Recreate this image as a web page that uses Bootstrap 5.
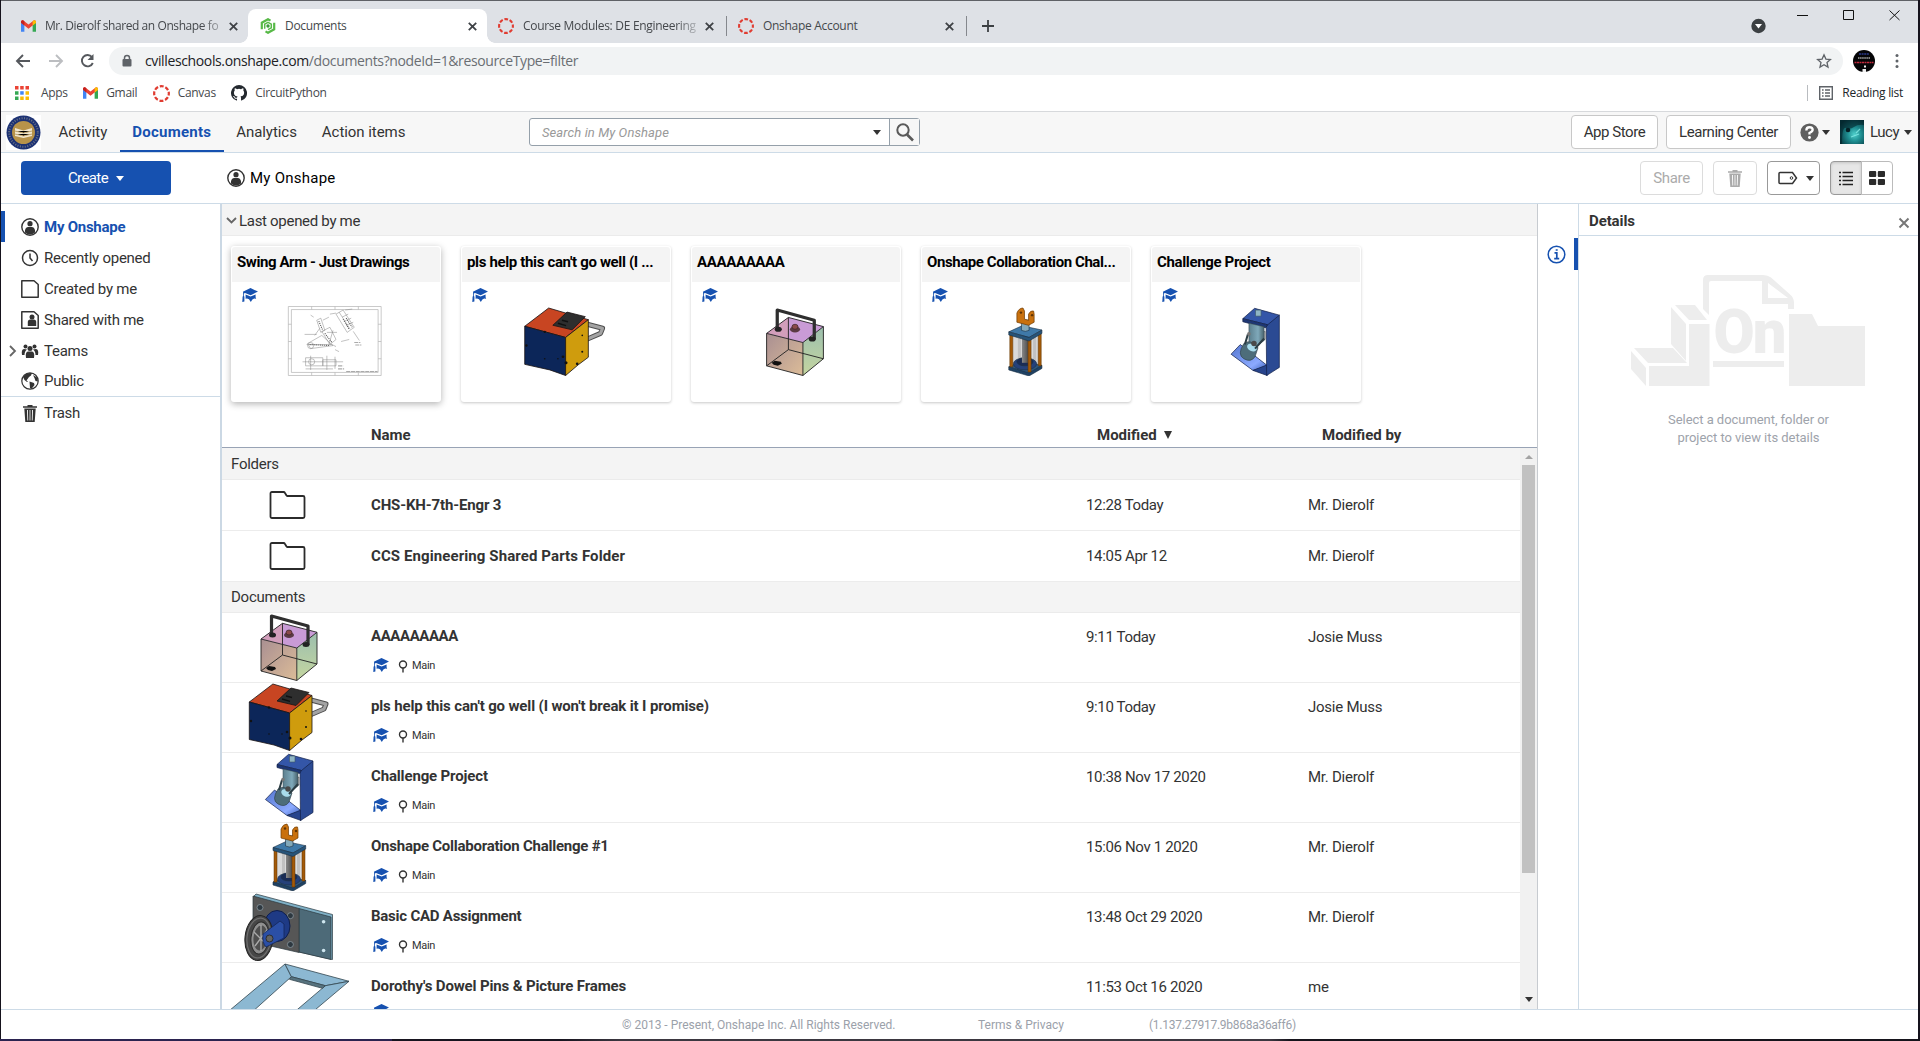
<!DOCTYPE html>
<html lang="en">
<head>
<meta charset="utf-8">
<title>Documents</title>
<link href="https://cdn.jsdelivr.net/npm/bootstrap@5.3.0/dist/css/bootstrap.min.css" rel="stylesheet">
<style>
:root{--blue:#1651b0;--rule:#cddbe7;--ink:#333}
html,body{height:1041px;overflow:hidden}
body{background:#15121c;font:15px/20px Roboto,"Liberation Sans",sans-serif;letter-spacing:-.25px;color:var(--ink)}
svg{display:block;flex:none}
.window{width:1917px;height:1039px;margin-left:1px;background:#fff;border-top:1px solid #5f6166}
.desk{height:2px;background:linear-gradient(90deg,#2b2350 0 392px,#17141f 392px 560px,#3b3740 620px 1270px,#16141c 1290px)}
.chrome-ui{font-family:"Open Sans","Noto Sans",sans-serif;font-size:12px;letter-spacing:-.3px;color:#45484c}
/* browser frame */
.tabstrip{height:42px;background:#dee1e6;padding-left:8px}
.tab{width:239px;height:34px;margin-top:8px;padding:0 10px 0 12px;position:relative}
.tab .tab-name{flex:1;overflow:hidden;white-space:nowrap;margin:0 8px 0 9px}
.tab .tab-name.tab-first{letter-spacing:-.42px;margin-right:6px}
.tab-shift{padding-left:11px;padding-right:12px}
.tab-fade{-webkit-mask:linear-gradient(90deg,#000 88%,rgba(0,0,0,.25))}
.tab-on{background:#fff;border-radius:8px 8px 0 0}
.tab-on:before,.tab-on:after{content:"";position:absolute;bottom:0;width:8px;height:8px}
.tab-on:before{left:-8px;background:radial-gradient(circle at 0 0,transparent 7.5px,#fff 8px)}
.tab-on:after{right:-8px;background:radial-gradient(circle at 100% 0,transparent 7.5px,#fff 8px)}
.tab-sep{border-right:1px solid #85888d;height:20px;align-self:center;margin-top:8px}
.addr-row{height:36px;padding:4px 10px 4px 12px}
.addr{height:28px;border-radius:14px;background:#f1f3f4;font-size:14px;letter-spacing:-.37px;color:#6a6e73;width:1734px;padding:0 11px 0 12px}
.addr b{font-weight:400;color:#202124}
.marks{height:33px;padding:0 15px 4px 14px;border-bottom:1px solid #d7d9dc}
.mark-item{margin-right:15.400px}
/* application bar */
.appbar{height:41px;background:#f7f7f7;border-bottom:1px solid var(--rule);padding-left:5px}
.appbar .nav{width:480px;flex:none;margin-left:5px}
.appbar .nav-link{padding:0 12.500px;height:40px;line-height:41px;color:var(--ink);letter-spacing:-.05px}
.appbar .nav-link.active{color:var(--blue);font-weight:700;border-bottom:2px solid var(--blue);letter-spacing:.25px}
.finder{flex:none;width:391px;height:28px;border:1px solid #95a0aa;border-radius:3px;background:#fff}
.finder i{font-size:13px;color:#999;letter-spacing:.1px;padding-top:2px}
.finder .go{width:30px;height:26px;border-left:1px solid #95a0aa;background:#f7f7f7}
.caret{width:0;height:0;border:4px solid transparent;border-top:5px solid var(--ink);border-bottom:0}
.app-right{margin-left:651px;width:347px;flex:none}
.obtn{height:34px;border:1px solid #c8c8c8;border-radius:4px;background:#fff;color:var(--ink);font-size:15px;line-height:30px;padding:0;letter-spacing:-.45px}
.app-store{width:87px;margin-top:-1px;flex:none}
.learn{width:125px;margin-top:-1px;flex:none}
.help{margin:0 3px 0 9px}
.face{margin-left:10px}
.user{margin:0 5px 0 6px;letter-spacing:-.5px}
.toolrow{height:51px;border-bottom:1px solid var(--rule);padding:8px 25px 8px 20px}
.create{width:150px;height:34px;background:var(--blue);border-radius:4px;color:#fff;font-size:15px;letter-spacing:-.6px;border:0;padding:0}
.white-caret{border-top-color:#fff}
.crumb{margin-left:56px}
.crumb span{letter-spacing:.25px;margin-left:5px}
.faint{color:#ababab;border-color:#dcdcdc}
.t-share{width:63px;letter-spacing:-.3px}
.t-trash{width:44px;margin-left:10px}
.t-tag{width:53px;margin:0 10px;border-color:#999}
.t-tag svg{margin-left:5px}
.t-view .btn{width:32px;height:34px;border-color:#bbb}
.t-view .sel{background:#e6e6e6;border-color:#999;box-shadow:inset 0 1px 3px rgba(0,0,0,.15)}
/* columns */
.work{height:805px}
.side{width:221px;border-right:2px solid #cbd8e4;padding-top:7px}
.side-item{height:30.800px;padding:2px 0 0 20px}
.side-item span{margin-left:5px}
.side-item.on{color:var(--blue);font-weight:700;box-shadow:inset 4px 0 var(--blue)}
.side-rule{border-top:1px solid var(--rule)}
.teams{padding-left:8px}
.teams svg:first-child{margin-right:4px}
.main-col{width:1316px;border-right:1px solid #c7cbd0}
.band{background:#f4f4f4;border-bottom:1px solid #ebebeb;height:32px;padding-left:9px}
.opened{padding:2px 0 0 4px}
.opened span{margin-left:2px;letter-spacing:-.3px}
.tiles{padding:10px 0 0 9px;gap:20px;height:166px}
.tile{width:210px;height:156px;border-radius:3px;background:#fff;box-shadow:0 1px 3px rgba(0,0,0,.22);padding:1px}
.tile.hot{box-shadow:0 2px 7px rgba(0,0,0,.3)}
.tile h6{height:35px;margin:0;border-radius:3px 3px 0 0;background:#f4f4f4;color:#000;font-size:15px;font-weight:700;line-height:30px;padding-left:5px;letter-spacing:-.35px;white-space:nowrap}
.tile .cap{margin:6px 0 0 10px}
.tile .pic{margin:4px 0 0 42px}
.l-tight{letter-spacing:-.42px!important}
.l-wide{letter-spacing:.1px!important}
.l-mid{letter-spacing:-.24px!important}
.heads{height:46px;border-bottom:1px solid #98a3b5;font-weight:700;padding-top:20px;letter-spacing:0}
.h-name{width:726px}
.h-mod{width:225px}
.sort{border:4px solid transparent;border-top:8px solid #333;border-bottom:0;margin:1px 0 0 7px}
.c-pic{width:149px;flex:none}
.c-name{width:715px;flex:none}
.c-mod{width:222px;flex:none;letter-spacing:-.35px}
.rows{height:561px;overflow:hidden}
.list{width:1298px}
.band.b2{height:31px}
.frow{height:51px;border-bottom:1px solid #ececec}
.drow{height:70px;border-bottom:1px solid #ececec}
.title{font-weight:700;letter-spacing:-.15px}
.drow .c-name{padding-top:13px}
.drow .c-mod,.drow .c-by{padding-top:14px}
.drow .c-pic svg{margin-left:7px;margin-top:-1px;height:69px;width:120px}
.frow .c-pic svg{margin-left:46.500px}
.meta{font-size:11px;letter-spacing:-.3px;margin-top:10px;line-height:20px;padding-left:1px}
.meta svg:first-child{margin:-2px 8px 0 0}
.meta svg:nth-child(2){margin-right:4px}
.bar{flex:none;width:17px;background:#f1f1f1;padding:7px 2px}
.bar .thumb{height:408px;background:#c1c1c1;margin-top:6px;flex:none}
.up{border:4px solid transparent;border-bottom:4px solid #a3a3a3;border-top:0}
.info-col{width:41px;border-right:1px solid var(--rule);padding-top:34px}
.info-tab{height:32px;border-right:4px solid var(--blue)}
.details h6{height:32px;border-bottom:1px solid var(--rule);margin:0;padding:2px 8px 0 10px;font-size:15px;font-weight:700;letter-spacing:-.1px}
.art{margin:39px 0 0 52px}
.hint{font-size:13px;line-height:18px;color:#9ea3ab;letter-spacing:-.05px;margin-top:25px}
.foot{height:30px;border-top:1px solid var(--rule);font-size:12px;color:#9ba1aa;letter-spacing:0;padding-left:621px}
.f1{width:356px}
.f2{width:171px}
.f3{letter-spacing:-.27px}
</style>
</head>
<body>
<svg width="0" height="0" class="position-absolute">
<defs>
<linearGradient id="gl" x1="0" y1="0" x2="1" y2="1"><stop stop-color="#a98f92"/><stop offset="1" stop-color="#dcbc98"/></linearGradient>
<linearGradient id="gr" x1="0" y1="0" x2="0" y2="1"><stop stop-color="#9cbfae"/><stop offset="1" stop-color="#c5d6a0"/></linearGradient>
<linearGradient id="gf" x1="0" y1="0" x2="1" y2="1"><stop stop-color="#5476cf"/><stop offset=".7" stop-color="#8caaff"/><stop offset="1" stop-color="#3a5fb8"/></linearGradient>
<linearGradient id="gm" x1="0" y1="0" x2="1" y2="0"><stop stop-color="#5c7f8e"/><stop offset=".6" stop-color="#7fa9ba"/><stop offset="1" stop-color="#48616c"/></linearGradient>
<linearGradient id="gs" x1="0" y1="0" x2="1" y2="0"><stop stop-color="#888"/><stop offset="1" stop-color="#4a4a4a"/></linearGradient>
<radialGradient id="neb" cx=".6" cy=".6" r=".7"><stop stop-color="#4fd0cc"/><stop offset=".4" stop-color="#1f8f92"/><stop offset="1" stop-color="#07333b"/></radialGradient>
<symbol id="gmail" viewBox="0 0 16 12"><path fill="#4285f4" d="M0 1.500V12h3.600V5z"/><path fill="#34a853" d="M16 1.500V12h-3.600V5z"/><path fill="#ea4335" d="M0 2.600V1.700C0 .2 1.700-.5 2.800.3L8 4.300l5.200-4C14.300-.5 16 .2 16 1.700V2.600L8 8.900z"/><path fill="#fbbc04" d="M12.400 5.500V1L13.200.3C14.300-.5 16 .2 16 1.700v1z"/><path fill="#c5221f" d="M0 1.700C0 .2 1.700-.5 2.800.3l.8.7v4.400L0 2.600z"/></symbol>
<symbol id="canvas" viewBox="0 0 16 16"><circle cx="8" cy="8" r="6.900" fill="none" stroke="#e03c31" stroke-width="2.100" stroke-dasharray="3.700 1.719" stroke-dashoffset="1.850"/></symbol>
<symbol id="ex" viewBox="0 0 8 8"><path d="M.7.7l6.600 6.600M7.300.7L.7 7.300" stroke="#3f4246" stroke-width="1.600"/></symbol>
<symbol id="person" viewBox="0 0 18 18"><circle cx="9" cy="9" r="8.200" fill="none" stroke="#333" stroke-width="1.400"/><circle cx="9" cy="5.700" r="2.600" fill="#333"/><path fill="#333" d="M4 14.500c-.4-3.500.8-5.200 3-5.600h4c2.200.4 3.400 2.100 3 5.600-3 2.500-7 2.500-10 0z"/></symbol>
<symbol id="trash" viewBox="0 0 14 17"><path fill="currentColor" fill-rule="evenodd" d="M4.500 0h5v1.200H14v1.600H0V1.200h4.500zM1.300 3.600h11.400L11.700 17H2.300zM4 5l.4 10.500h.8L4.900 5zm2.600 0v10.500h.8V5zm2.500 0l-.3 10.500h.8L10 5z"/></symbol>
<symbol id="cap" viewBox="0 0 16 14"><path fill="#1651b0" d="M8.500 0L16 3.600 8.700 7.200 3 5 1.900 5.600V8l.5.800V13.500L.300 14l.3-5.200.5-.8V4.200L.9 3.800zM3.600 6.500l5 1.900 5-2v2.800l.6 1.600-2-.3-1.800.9-1.600 2.600L7 11.200l-2-.8-1.400.3z"/></symbol>
<symbol id="branch" viewBox="0 0 10 13"><circle cx="5" cy="4.500" r="3.500" fill="none" stroke="#333" stroke-width="1.400"/><path stroke="#333" stroke-width="1.400" d="M5 8v4.500"/></symbol>
<symbol id="folder" viewBox="0 0 36 28"><path fill="none" stroke="#2b2b2b" stroke-width="1.800" stroke-linejoin="round" d="M1 2.500Q1 1 2.500 1H14q1 0 1.500 1L17 4.500q.4.500 1 .5h15.500Q35 5 35 6.500v19q0 1.500-1.500 1.500h-31Q1 27 1 25.500z"/></symbol>
<symbol id="p-cube" viewBox="0 0 120 69"><g stroke="#1a1414" stroke-width=".8" stroke-linejoin="round"><path fill="none" stroke="#4e4e4e" stroke-width="5" d="M82 18l15 4-2 5-14 6"/><path fill="none" stroke="#a3a3a3" stroke-width="3" d="M82 18l15 4-2 5-14 6"/><path fill="#c84522" d="M43.900 2L83 13.500 60.600 31 20.300 20z"/><path fill="#0c2659" d="M20.300 20l40.300 11v37.500L45 63l-24.700-5.500z"/><path fill="#cf9c0d" d="M60.600 31L83 13.500v37L73 58l-12.400 10.500z"/><path fill="#2e2e2e" d="M48 19l14-13 18 4.500-13 13z"/></g><path fill="none" stroke="#111" stroke-width="1.400" d="M53 17l8 2.300M57 14l6 1.500"/><g fill="#111"><circle cx="22" cy="39" r="1.200"/><circle cx="40" cy="52" r=".8"/><circle cx="53" cy="52" r=".8"/><circle cx="58" cy="50" r="1.300"/><circle cx="61" cy="56" r="1.500"/><circle cx="77" cy="29" r=".8"/><circle cx="77" cy="45" r="1"/><circle cx="72" cy="57" r="1.300"/><circle cx="40" cy="25.500" r="1.200"/></g></symbol>
<symbol id="p-clear" viewBox="0 0 120 69"><path fill="url(#gl)" d="M32 27l35.800 9v32.500L32 59z"/><path fill="url(#gr)" d="M67.800 36L88 20.300V52L67.800 68.500z"/><path fill="#c99bd6" d="M53.500 11.300L88 20.300 67.800 36 32 27z"/><path fill="#d9a0a8" opacity=".6" d="M53.500 11.300V32L32 27z"/><g fill="none" stroke="#222" stroke-width=".9" stroke-linejoin="round"><path d="M53.500 11.300L88 20.300 67.800 36 32 27zM32 27v32l35.800 9.500V36M67.800 68.500L88 52V20.300M53.500 11.300V43L32 59M53.500 43L88 52"/></g><path fill="none" stroke="#2f2f2f" stroke-width="3.200" stroke-linejoin="round" d="M42.500 24V4L79 14v19"/><ellipse cx="43.500" cy="23" rx="3.500" ry="2.500" fill="#222"/><ellipse cx="77" cy="32.500" rx="3.500" ry="2.500" fill="#222"/><ellipse cx="60" cy="23" rx="5" ry="3" fill="#5a3a44"/><ellipse cx="60" cy="20.500" rx="3" ry="2.500" fill="#8a4a4a" stroke="#3a2226" stroke-width=".7"/><path fill="#111" d="M37 56l3-2 6 1 1 2-4 2-4-1z"/></symbol>
<symbol id="p-arm" viewBox="0 0 120 69"><g stroke="#14224a" stroke-width=".7" stroke-linejoin="round"><path fill="url(#gf)" d="M36.400 47.500L45.500 38l27 21L58 63.500z"/><path fill="#27448c" d="M58 63.500L72 58v10.500z"/><path fill="#2b4a93" d="M71 18.500L84 9v51.500L71.500 68.500z"/><path fill="#3456a8" d="M59.600 2.300L84 9 72.500 18.500 48 12.500z"/><path fill="#1e3775" d="M48 12.500l24.500 6-2 3L48 15.500z"/></g><path fill="#c8c8c8" stroke="#555" stroke-width=".6" d="M65 27l5-2v8l-5 2z"/><path fill="url(#gm)" stroke="#33474f" stroke-width=".5" d="M54 17l15 3.500V34l-8 6-7-4z"/><path fill="#4d6d7a" stroke="#2c3d44" stroke-width=".6" d="M49 37q6-5 14 4l-3 9q-4 6-11 2t0-15z"/><ellipse cx="57" cy="41" rx="5" ry="3.500" fill="#a8dcec" transform="rotate(25 57 41)"/><path stroke="#2c3d44" stroke-width="2" d="M53 28l-3 10M69 32l-9 10"/><circle cx="59" cy="37" r="2.700" fill="#4a4a4a"/><circle cx="54" cy="27.500" r="1.800" fill="#777"/><path fill="#8fb5c4" stroke="#3c5662" stroke-width=".6" d="M60.500 4h5.500v6h-5.500z"/></symbol>
<symbol id="p-piston" viewBox="0 0 120 69"><path fill="#dadada" d="M48 28h27v30H48z"/><path fill="#c1c1c1" d="M53 30h3v28h-3zM68 30h3v28h-3z"/><g stroke="#1c3145" stroke-width=".6" stroke-linejoin="round"><path fill="#2e567d" d="M44 60l13-6 19.700 4.500L64 67z"/><path fill="#1f4264" d="M44 60l20 6 12.700-7.500v3L64 69l-20-6z"/><ellipse cx="60" cy="57" rx="11.500" ry="6" fill="#25417a"/><ellipse cx="60" cy="55" rx="8" ry="4" fill="#1a2c55"/></g><path fill="url(#gs)" d="M57 29h6.500v27H57z"/><path fill="#a35a08" stroke="#5e3303" stroke-width=".5" d="M45 27h3v33h-3zM63 31h3v34h-3zM73 27h3v32h-3z"/><g stroke="#1c3145" stroke-width=".6" stroke-linejoin="round"><path fill="#3f79a8" d="M44 25.500l13-6 19.700 4.200L64 31z"/><path fill="#275479" d="M44 25.500L64 31l12.700-7.300v3.300L64 34.500l-20-6z"/><path fill="#83a9ba" d="M56.500 14h7.500v10q-3.500 2-7.500 0z"/></g><path fill="#c9710e" stroke="#6e3c04" stroke-width=".7" d="M52 16V7q2-5 6-5l1.500 3v8l4 1V8q2-4 5-3l.5 3v8l-5.500 3z"/><circle cx="56" cy="6.500" r="1.200" fill="#5e3303"/><circle cx="67" cy="9" r="1.200" fill="#5e3303"/></symbol>
<symbol id="p-caster" viewBox="0 0 120 69"><g stroke="#2b3940" stroke-width=".7" stroke-linejoin="round"><path fill="#7fb0c6" d="M25 4l2-2 76.500 20.500v45H103L70 60z"/><path fill="#4d6a78" d="M70 16.500L102 25v42.500L70 60z"/><path fill="#565656" d="M24 4l46 12.500v44L24 50z"/></g><circle cx="94.600" cy="29.700" r="1.800" fill="#cfe6ef"/><circle cx="94.600" cy="58.500" r="1.800" fill="#cfe6ef"/><g fill="#2d3840" stroke="#8a979e" stroke-width=".8"><circle cx="31" cy="15.500" r="3"/><circle cx="61.400" cy="23.700" r="3"/><circle cx="61.400" cy="52.500" r="3"/></g><ellipse cx="48" cy="34" rx="13" ry="15.500" fill="#1e3a85" stroke="#101f4c"/><ellipse cx="30" cy="46" rx="14" ry="22.500" fill="#474747" stroke="#222" transform="rotate(6 30 46)"/><ellipse cx="30" cy="46" rx="12" ry="20" fill="none" stroke="#6e6e6e" stroke-width="1.200" transform="rotate(6 30 46)"/><ellipse cx="31" cy="46" rx="9" ry="16" fill="#8f8f8f" stroke="#2a2a2a" transform="rotate(6 31 46)"/><ellipse cx="31.500" cy="46" rx="7" ry="12.500" fill="#4e4e4e" transform="rotate(6 31 46)"/><path stroke="#aaa" stroke-width="1.300" d="M32 33v26M25 40l13 13M38 38L26 54"/><path fill="#2b4fa6" stroke="#132658" stroke-width=".8" d="M34 42l17-13 4 3v14L37 55q-4-4-3-13z"/><circle cx="40.500" cy="46.500" r="3.500" fill="#636363" stroke="#222" stroke-width=".8"/></symbol>
<symbol id="p-frame" viewBox="0 0 120 69"><g stroke="#33464f" stroke-width=".8" stroke-linejoin="round" fill="#8cb8d2"><path d="M56 2L-24 69H2L62.400 14.700z"/><path d="M56 2l64 17.300-23.600 4.400-34-9z"/><path d="M120 19.300L61 69H43l53.400-45.300z"/><path fill="#57737f" d="M62.400 14.700l34 9-3 2.600-33-9z"/></g></symbol>
<symbol id="p-draw" viewBox="0 0 120 69"><g fill="none" stroke="#b4b4b4" stroke-width=".7"><path d="M14 .5h91.500v68H14zM17 3.500h85.500v62H17zM37 .5v3M60 .5v3M83 .5v3M37 65.500v3M60 65.500v3M83 65.500v3M14 18h3M14 35h3M14 52h3M102.500 18h3M102.500 35h3M102.500 52h3"/></g><g fill="none" stroke="#858585" stroke-width=".5"><path d="M42 14l4-2 4 12-4 2zM47 25l8-4 6 12-6 5zM33 37l14-8 11 10-22 3zM32 38h25l4 2M40 29l5-7M58 24l-4 14M30 28h12M52 26h10M39 11l-3-2M48 14l6-3M61 8l7-4 11 17-7 5zM64 6l11 17M67 11l6-3M69 15l7-3M71 19l7-3M55 8l6-1M70 4l7-1M66 35l8-2M78 25l6 9M60 43l4 2M28 55h40M31 51h17v8H31zM48 53h13v6H48zM60 50v12M31 62h27M36 49v14M52 49v14"/><circle cx="36" cy="39" r="3"/><circle cx="37" cy="55" r="3"/></g><path stroke="#aaa" stroke-width="1.100" stroke-dasharray="4 .7" d="M71 64.500h31M79 36h6M80 38.500h6M63 59h5M63 62h6"/><g stroke="#555" stroke-width="1.100" stroke-dasharray="1 1"><path d="M35 38l20 1M50 27l7 9M68 13l6 10M71 12l6 9M44 15l4 9"/></g></symbol>
</defs>
</svg>

<div class="window d-flex flex-column">
  <div class="chrome-ui">
    <div class="tabstrip d-flex">
      <div class="tab d-flex align-items-center"><svg width="15" height="12"><use href="#gmail"/></svg><span class="tab-name tab-first tab-fade">Mr. Dierolf shared an Onshape fo</span><svg width="9" height="9"><use href="#ex"/></svg></div>
      <div class="tab tab-on d-flex align-items-center"><svg width="16" height="16" viewBox="0 0 16 16"><path fill="none" stroke="#57b947" stroke-width="2.200" d="M1.800 11.200V4.700L8 1.200l2.500 1.400M14.200 4.800v6.500L8 14.800l-2.500-1.400"/><path fill="none" stroke="#57b947" stroke-width="1.500" d="M4.700 10.800V6.200L8 4.300l3.300 1.900v3.600L8 11.700"/><circle cx="8" cy="8" r="1.700" fill="#3b9b3a"/></svg><span class="tab-name">Documents</span><svg width="9" height="9"><use href="#ex"/></svg></div>
      <div class="tab tab-shift d-flex align-items-center"><svg width="16" height="16"><use href="#canvas"/></svg><span class="tab-name tab-fade">Course Modules: DE Engineering</span><svg width="9" height="9"><use href="#ex"/></svg></div>
      <div class="tab-sep"></div>
      <div class="tab tab-shift d-flex align-items-center"><svg width="16" height="16"><use href="#canvas"/></svg><span class="tab-name">Onshape Account</span><svg width="9" height="9"><use href="#ex"/></svg></div>
      <div class="tab-sep"></div>
      <svg class="align-self-center mt-2" width="46" height="14" viewBox="0 0 46 14"><path d="M15 7h12M21 1v12" stroke="#3c4043" stroke-width="1.800"/></svg>
      <svg class="ms-auto" width="182" height="42" viewBox="0 0 182 42"><circle cx="22.500" cy="25" r="7.200" fill="#3c4043"/><path d="M19 23h7l-3.500 4.500z" fill="#fff"/><g stroke="#111" fill="none"><path d="M61 14.500h11M107.500 9.500h10v9h-10zM153.500 9.500l10 9.500M163.500 9.500l-10 9.500"/></g></svg>
    </div>
    <div class="addr-row d-flex align-items-center">
      <svg width="96" height="20" viewBox="0 0 96 20" fill="none" stroke-width="1.900"><path stroke="#55585d" d="M17 10H4M10 4l-6 6 6 6"/><path stroke="#bcbec1" d="M36 10h13M43 4l6 6-6 6"/><path stroke="#55585d" d="M79 6A5.700 5.700 0 1 0 79.800 12"/><path fill="#55585d" d="M80.500 3v6h-6z"/></svg>
      <div class="addr d-flex align-items-center"><svg width="12" height="14" viewBox="0 0 12 14" class="me-2"><path fill="none" stroke="#5f6368" stroke-width="1.500" d="M3.500 6V4a2.500 2.500 0 0 1 5 0v2"/><rect x="1.500" y="5" width="9" height="7.500" rx="1" fill="#5f6368"/></svg><span class="ms-1"><b>cvilleschools.onshape.com</b>/documents?nodeId=1&amp;resourceType=filter</span>
        <svg class="ms-auto" width="16" height="16" viewBox="0 0 16 16"><path fill="none" stroke="#5f6368" stroke-width="1.300" d="M8 1.800l1.900 4.300 4.500.4L11 9.500l1 4.600-4-2.400-4 2.400 1-4.600-3.400-3 4.500-.4z"/></svg></div>
      <svg class="ms-auto" width="64" height="24" viewBox="0 0 64 24"><circle cx="20" cy="12" r="11" fill="#050507"/><path stroke="#2b3a8c" stroke-width="1.400" stroke-dasharray="2 .6" d="M15 5h10"/><path stroke="#aaa" stroke-width="1.400" stroke-dasharray="1.500 .6" d="M14 9h12"/><path stroke="#c22a3c" stroke-width="1.600" stroke-dasharray="2 .5" d="M10.500 13.500h19"/><path fill="#eee" d="M18.500 20h3.500v3h-3.500zM20 16.500h2v2h-2z"/><g fill="#5f6368"><circle cx="53" cy="6.500" r="1.500"/><circle cx="53" cy="12" r="1.500"/><circle cx="53" cy="17.500" r="1.500"/></g></svg>
    </div>
    <div class="marks d-flex align-items-center">
      <div class="mark-item d-flex align-items-center"><svg width="14" height="14" viewBox="0 0 14 14" class="me-2"><path fill="#ea4335" d="M0 0h3.500v3.500H0zM5.200 0h3.500v3.500H5.200zM10.500 0H14v3.500h-3.500z"/><path fill="#34a853" d="M0 5.200h3.500v3.500H0zM0 10.500h3.500V14H0z"/><path fill="#4285f4" d="M5.200 5.200h3.500v3.500H5.200z"/><path fill="#fbbc04" d="M10.500 5.200H14v3.500h-3.500zM5.200 10.500h3.500V14H5.200zM10.500 10.500H14V14h-3.500z"/></svg><span class="ms-1">Apps</span></div>
      <div class="mark-item d-flex align-items-center"><svg width="15" height="12" class="me-2"><use href="#gmail"/></svg>Gmail</div>
      <div class="mark-item d-flex align-items-center"><svg width="17" height="17" class="me-2"><use href="#canvas"/></svg>Canvas</div>
      <div class="mark-item d-flex align-items-center"><svg width="16" height="16" viewBox="0 0 16 16" class="me-2"><path fill="#24292f" d="M8 0a8 8 0 0 0-2.530 15.590c.4.070.55-.17.55-.38v-1.490c-2.010.37-2.530-.49-2.690-.94-.09-.23-.48-.94-.82-1.130-.28-.15-.68-.52-.01-.53.63-.01 1.080.58 1.230.82.72 1.210 1.870.87 2.330.66.07-.52.28-.87.51-1.070-1.780-.2-3.640-.89-3.640-3.950 0-.87.31-1.590.82-2.150-.08-.2-.36-1.020.08-2.120 0 0 .67-.21 2.200.82a7.600 7.600 0 0 1 4 0c1.530-1.040 2.200-.82 2.200-.82.44 1.100.16 1.920.08 2.120.51.56.82 1.270.82 2.150 0 3.070-1.870 3.750-3.650 3.950.29.25.54.73.54 1.480v2.200c0 .21.15.46.55.38A8 8 0 0 0 8 0z"/></svg>CircuitPython</div>
      <div class="ms-auto d-flex align-items-center text-dark"><svg width="28" height="16" viewBox="0 0 28 16" class="me-2"><path stroke="#b9bcc0" d="M1.500 0v16"/><path fill="none" stroke="#5f6368" stroke-width="1.400" d="M13.700 1.700h12.600v12.600H13.700zM16 5h1.600M19 5h5M16 8h1.600M19 8h5M16 11h1.600M19 11h5"/></svg>Reading list</div>
    </div>
  </div>

  <div class="appbar d-flex align-items-center">
    <svg width="35" height="35" viewBox="0 0 35 35"><path fill="#fff" d="M0 0h35v35H0z"/><circle cx="17.500" cy="17.500" r="17" fill="#1d3274"/><circle cx="17.500" cy="17.500" r="14.300" fill="none" stroke="#6c7488" stroke-width="2" stroke-dasharray="1 1.500"/><circle cx="17.500" cy="17.500" r="11.500" fill="#b8934a"/><path fill="#f1e6cf" d="M9 13l8.500 2.500L26 13v8l-8.500 2L9 21z"/><path stroke="#c9ad74" d="M9 16l8.500 2 8.500-2M9 19l8.500 2 8.500-2"/></svg>
    <nav class="nav">
      <a class="nav-link" href="#">Activity</a><a class="nav-link active" href="#">Documents</a><a class="nav-link" href="#">Analytics</a><a class="nav-link" href="#">Action items</a>
    </nav>
    <div class="finder d-flex align-items-center ms-auto"><i class="ps-1 ms-2">Search in My Onshape</i><span class="caret ms-auto me-2"></span><div class="go d-flex align-items-center justify-content-center"><svg width="18" height="19" viewBox="0 0 18 19"><circle cx="7" cy="7" r="5.700" fill="none" stroke="#5a5a5a" stroke-width="2"/><path stroke="#5a5a5a" stroke-width="2.600" d="M11 11.500l6 6"/></svg></div></div>
    <div class="app-right d-flex align-items-center">
      <button class="btn obtn app-store">App Store</button><button class="btn obtn learn ms-2">Learning Center</button>
      <svg width="19" height="19" viewBox="0 0 18 18" class="help"><circle cx="9" cy="9" r="8.600" fill="#5f5f5f"/><path fill="none" stroke="#fff" stroke-width="2.200" d="M6 7q0-3 3-3t3 2.500Q12 8 9 9.500V11"/><circle cx="9" cy="13.700" r="1.400" fill="#fff"/></svg><span class="caret"></span>
      <svg width="24" height="24" viewBox="0 0 24 24" class="face"><rect width="24" height="24" fill="url(#neb)"/><path fill="#04232a" opacity=".6" d="M0 0h24v5q-6-1-10 2T6 8 2 24H0z"/><circle cx="8" cy="10" r="2.300" fill="#052026"/><path stroke="#8ff3ee" stroke-width="1.200" opacity=".7" d="M16 13l4-4M11 17l8-3"/></svg>
      <span class="user">Lucy</span><span class="caret"></span>
    </div>
  </div>

  <div class="toolrow d-flex align-items-center">
    <button class="create btn d-flex align-items-center justify-content-center">Create <span class="caret ms-2 white-caret"></span></button>
    <div class="crumb d-flex align-items-center text-black"><svg width="18" height="18"><use href="#person"/></svg><span>My Onshape</span></div>
    <div class="ms-auto d-flex tools">
      <button class="btn obtn faint t-share">Share</button>
      <button class="btn obtn faint t-trash d-flex align-items-center justify-content-center"><svg width="14" height="17"><use href="#trash"/></svg></button>
      <button class="btn obtn t-tag d-flex align-items-center justify-content-center"><svg width="20" height="14" viewBox="0 0 20 14"><path fill="none" stroke="#333" stroke-width="1.500" d="M2 1.500h12.500L18.500 7l-4 5.500H2q-1 0-1-1v-9q0-1 1-1z"/><circle cx="13.500" cy="7" r="1.300" fill="none" stroke="#333"/></svg><span class="caret ms-2"></span></button>
      <div class="btn-group t-view"><button class="btn obtn sel d-flex align-items-center justify-content-center"><svg width="14" height="15" viewBox="0 0 14 15"><path stroke="#222" stroke-width="1.700" d="M0 1.500h2M3.500 1.500H14M0 5.500h2M3.500 5.500H14M0 9.500h2M3.500 9.500H14M0 13.500h2M3.500 13.500H14"/></svg></button><button class="btn obtn d-flex align-items-center justify-content-center"><svg width="16" height="14" viewBox="0 0 16 14" fill="#2b2b2b"><rect width="7.200" height="6" rx="1"/><rect x="8.800" width="7.200" height="6" rx="1"/><rect y="8" width="7.200" height="6" rx="1"/><rect x="8.800" y="8" width="7.200" height="6" rx="1"/></svg></button></div>
    </div>
  </div>

  <div class="work d-flex">
    <aside class="side">
      <div class="side-item on d-flex align-items-center"><svg width="18" height="18"><use href="#person"/></svg><span>My Onshape</span></div>
      <div class="side-item d-flex align-items-center"><svg width="18" height="18" viewBox="0 0 18 18"><g fill="none" stroke="#333" stroke-width="1.500"><circle cx="9" cy="9" r="7.500"/><path d="M9 4.500V9l2.500 3"/></g></svg><span>Recently opened</span></div>
      <div class="side-item d-flex align-items-center"><svg width="18" height="18" viewBox="0 0 18 18"><path fill="none" stroke="#333" stroke-width="1.500" stroke-linejoin="round" d="M.8.8H13L17.200 4.500v12.700H.8z"/></svg><span>Created by me</span></div>
      <div class="side-item d-flex align-items-center"><svg width="18" height="18" viewBox="0 0 18 18"><path fill="none" stroke="#333" stroke-width="1.500" stroke-linejoin="round" d="M.8.8H13L17.200 4.500v12.700H.8z"/><circle cx="11" cy="6" r="2.500" fill="#333"/><path fill="#333" d="M6.800 15v-4q0-2.500 2.500-2.500h3.400q2.500 0 2.500 2.500v4z"/></svg><span>Shared with me</span></div>
      <div class="side-item teams d-flex align-items-center"><svg width="8" height="12" viewBox="0 0 8 12"><path fill="none" stroke="#666" stroke-width="1.800" d="M1 1l5 5-5 5"/></svg><svg width="18" height="14" viewBox="0 0 18 14" fill="#333"><circle cx="9" cy="4.500" r="2.500"/><circle cx="4.500" cy="2.400" r="2"/><circle cx="13.500" cy="2.400" r="2"/><path d="M5 14q-1-6 2-6.500h4q3 .5 2 6.500zM1 11q-1-5.500 2-6l3 .5q-2.500 1.500-2.500 5.500zM17 11q1-5.500-2-6l-3 .5q2.500 1.500 2.500 5.500z"/></svg><span>Teams</span></div>
      <div class="side-item d-flex align-items-center"><svg width="18" height="18" viewBox="0 0 18 18"><circle cx="9" cy="9" r="8.200" fill="none" stroke="#333" stroke-width="1.200"/><path fill="#333" d="M2 5q3-4.500 9-4l-1 2.500L8 5 5.500 8.500 7 9.500l-1 .5L3.500 8zM8.500 9.500l4.500 1.500.5 2-3 4L9 16zM12 3l4 2.500 1 4-2.500-.5-1-3z"/></svg><span>Public</span></div>
      <div class="side-rule"></div>
      <div class="side-item d-flex align-items-center"><svg width="18" height="17" viewBox="0 0 18 17"><use href="#trash" x="2" width="14" height="17"/></svg><span>Trash</span></div>
    </aside>

    <main class="main-col">
      <div class="band d-flex align-items-center opened"><svg width="11" height="7" viewBox="0 0 11 7"><path fill="none" stroke="#666" stroke-width="1.800" d="M1 1l4.500 4.500L10 1"/></svg><span>Last opened by me</span></div>
      <div class="tiles d-flex">
        <div class="tile hot"><h6 class="l-tight">Swing Arm - Just Drawings</h6><svg class="cap" width="16" height="14"><use href="#cap"/></svg><svg class="pic" width="122" height="70"><use href="#p-draw"/></svg></div>
        <div class="tile"><h6>pls help this can't go well (I ...</h6><svg class="cap" width="16" height="14"><use href="#cap"/></svg><svg class="pic" width="122" height="70"><use href="#p-cube"/></svg></div>
        <div class="tile"><h6>AAAAAAAAA</h6><svg class="cap" width="16" height="14"><use href="#cap"/></svg><svg class="pic" width="122" height="70"><use href="#p-clear"/></svg></div>
        <div class="tile"><h6 class="l-tight">Onshape Collaboration Chal...</h6><svg class="cap" width="16" height="14"><use href="#cap"/></svg><svg class="pic" width="122" height="70"><use href="#p-piston"/></svg></div>
        <div class="tile"><h6>Challenge Project</h6><svg class="cap" width="16" height="14"><use href="#cap"/></svg><svg class="pic" width="122" height="70"><use href="#p-arm"/></svg></div>
      </div>
      <div class="heads d-flex align-items-center"><div class="c-pic"></div><div class="h-name">Name</div><div class="h-mod d-flex align-items-center">Modified<span class="sort"></span></div><div>Modified by</div></div>
      <div class="rows d-flex">
        <div class="list">
          <div class="band d-flex align-items-center">Folders</div>
          <div class="frow d-flex align-items-center"><div class="c-pic"><svg width="37" height="28"><use href="#folder"/></svg></div><div class="c-name title">CHS-KH-7th-Engr 3</div><div class="c-mod">12:28 Today</div><div>Mr. Dierolf</div></div>
          <div class="frow d-flex align-items-center"><div class="c-pic"><svg width="37" height="28"><use href="#folder"/></svg></div><div class="c-name title l-wide">CCS Engineering Shared Parts Folder</div><div class="c-mod">14:05 Apr 12</div><div>Mr. Dierolf</div></div>
          <div class="band b2 d-flex align-items-center">Documents</div>
          <div class="drow d-flex"><div class="c-pic"><svg><use href="#p-clear"/></svg></div><div class="c-name"><div class="title l-tight">AAAAAAAAA</div><div class="meta d-flex align-items-center"><svg width="18" height="14"><use href="#cap"/></svg><svg width="10" height="13"><use href="#branch"/></svg>Main</div></div><div class="c-mod">9:11 Today</div><div class="c-by">Josie Muss</div></div>
          <div class="drow d-flex"><div class="c-pic"><svg><use href="#p-cube"/></svg></div><div class="c-name"><div class="title">pls help this can't go well (I won't break it I promise)</div><div class="meta d-flex align-items-center"><svg width="18" height="14"><use href="#cap"/></svg><svg width="10" height="13"><use href="#branch"/></svg>Main</div></div><div class="c-mod">9:10 Today</div><div class="c-by">Josie Muss</div></div>
          <div class="drow d-flex"><div class="c-pic"><svg><use href="#p-arm"/></svg></div><div class="c-name"><div class="title">Challenge Project</div><div class="meta d-flex align-items-center"><svg width="18" height="14"><use href="#cap"/></svg><svg width="10" height="13"><use href="#branch"/></svg>Main</div></div><div class="c-mod">10:38 Nov 17 2020</div><div class="c-by">Mr. Dierolf</div></div>
          <div class="drow d-flex"><div class="c-pic"><svg><use href="#p-piston"/></svg></div><div class="c-name"><div class="title l-mid">Onshape Collaboration Challenge #1</div><div class="meta d-flex align-items-center"><svg width="18" height="14"><use href="#cap"/></svg><svg width="10" height="13"><use href="#branch"/></svg>Main</div></div><div class="c-mod">15:06 Nov 1 2020</div><div class="c-by">Mr. Dierolf</div></div>
          <div class="drow d-flex"><div class="c-pic"><svg><use href="#p-caster"/></svg></div><div class="c-name"><div class="title l-mid">Basic CAD Assignment</div><div class="meta d-flex align-items-center"><svg width="18" height="14"><use href="#cap"/></svg><svg width="10" height="13"><use href="#branch"/></svg>Main</div></div><div class="c-mod">13:48 Oct 29 2020</div><div class="c-by">Mr. Dierolf</div></div>
          <div class="drow d-flex"><div class="c-pic"><svg><use href="#p-frame"/></svg></div><div class="c-name"><div class="title">Dorothy's Dowel Pins &amp; Picture Frames</div><div class="meta d-flex align-items-center"><svg width="18" height="14"><use href="#cap"/></svg></div></div><div class="c-mod">11:53 Oct 16 2020</div><div class="c-by">me</div></div>
        </div>
        <div class="bar d-flex flex-column align-items-center"><span class="up"></span><div class="thumb w-100"></div><span class="caret mt-auto"></span></div>
      </div>
    </main>

    <div class="info-col"><div class="info-tab d-flex align-items-center justify-content-center"><svg width="19" height="19" viewBox="0 0 19 19"><circle cx="9.500" cy="9.500" r="8.300" fill="none" stroke="#1651b0" stroke-width="1.500"/><path fill="none" stroke="#1651b0" stroke-width="1.700" d="M7.500 7.900h2.300v5.300M7.200 13.600h5M8.700 5h2"/></svg></div></div>
    <section class="details flex-grow-1">
      <h6 class="d-flex align-items-center justify-content-between">Details<svg width="12" height="12" viewBox="0 0 12 12" class="mt-1"><path d="M1.500 1.500l9 9M10.500 1.500l-9 9" stroke="#777" stroke-width="2"/></svg></h6>
      <svg class="art" width="234" height="111" viewBox="0 0 234 111"><g fill="#ededed"><path d="M0 76l15 17v18L0 94zM3 73h39l14 15H17zM18 91h40V49h20.500v62H18zM40 32l15 17v37L40 69zM44 30h20l12 15H58z"/><path fill-rule="evenodd" d="M72 34V5q0-5 5-5h55q5 0 8 2.500l18 16q5 4 5 9V34h-6v-5h-26V6H80q-2 0-2 2v32zM137 8v15h20z"/><path d="M82 86h71v6H82zM158 39h23l6 12h47v60h-76z"/><text x="82.500" y="78" font-family="Roboto,sans-serif" font-weight="900" font-size="61" letter-spacing="-2" textLength="71" lengthAdjust="spacingAndGlyphs">On</text></g></svg>
      <div class="hint text-center">Select a document, folder or<br>project to view its details</div>
    </section>
  </div>
  <footer class="foot d-flex align-items-center"><span class="f1">© 2013 - Present, Onshape Inc. All Rights Reserved.</span><span class="f2">Terms &amp; Privacy</span><span class="f3">(1.137.27917.9b868a36aff6)</span></footer>
</div>
<div class="desk"></div>
<script src="https://cdn.jsdelivr.net/npm/bootstrap@5.3.0/dist/js/bootstrap.bundle.min.js"></script>
</body>
</html>
